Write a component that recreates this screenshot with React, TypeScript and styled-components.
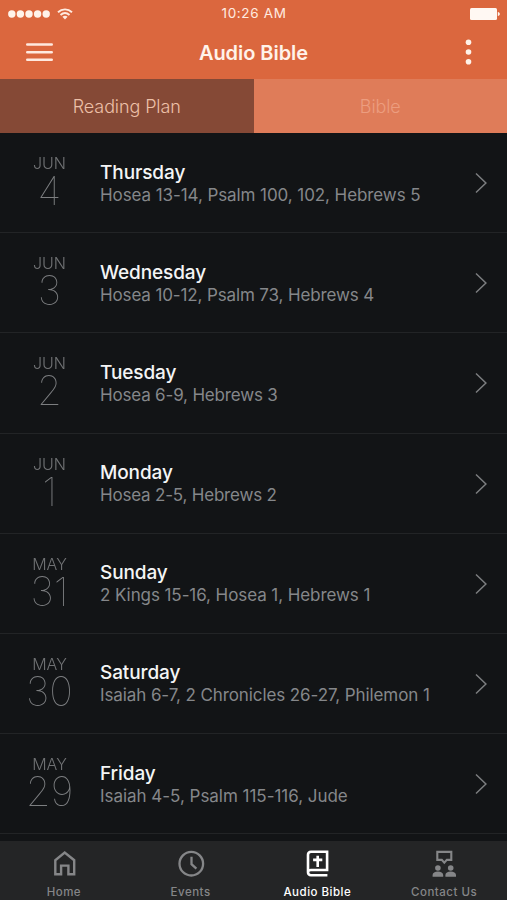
import React from "react";
import styled, { createGlobalStyle } from "styled-components";

const GlobalStyle = createGlobalStyle`
  * { box-sizing: border-box; }
  body { margin: 0; background: #121416; }
`;

const Screen = styled.div`
  width: 507px;
  height: 900px;
  overflow: hidden;
  display: flex;
  flex-direction: column;
  background: #121416;
  color: #fff;
  font-family: Inter, "Liberation Sans", sans-serif;
`;

const Header = styled.header`
  flex: none;
  height: 79px;
  background: #db673e;
`;

const StatusBar = styled.div`
  height: 27px;
  display: grid;
  grid-template-columns: 1fr auto 1fr;
  align-items: center;
  padding: 0 7px 0 8px;
`;

const Signal = styled.div`
  display: flex;
  align-items: center;
  gap: 7px;
`;

const Clock = styled.time`
  font-size: 13.5px;
  letter-spacing: 0.65px;
  line-height: 27px;
  color: #ffebe0;
`;

const BatterySlot = styled.div`
  display: flex;
  justify-content: flex-end;
`;

const NavBar = styled.div`
  height: 52px;
  display: grid;
  grid-template-columns: 1fr auto 1fr;
  align-items: center;
  padding: 0 35px 2px 26px;
`;

const IconButton = styled.button<{ $end?: boolean }>`
  display: flex;
  padding: 0;
  border: 0;
  background: none;
  justify-self: ${(p) => (p.$end ? "end" : "start")};
`;

const Title = styled.h1`
  margin: 1px 0 0 9px;
  font-size: 20px;
  font-weight: 600;
  letter-spacing: -0.05px;
  line-height: 24px;
  color: #fff3ea;
`;

const Tabs = styled.div`
  flex: none;
  height: 54px;
  display: flex;
`;

const Tab = styled.button<{ $active?: boolean }>`
  flex: 1;
  padding: 0;
  border: 0;
  background: ${(p) => (p.$active ? "#854936" : "#df7c59")};
  color: ${(p) => (p.$active ? "#edc0a8" : "#ec9d7f")};
  font-family: inherit;
  font-size: 18px;
  font-weight: 300;
  letter-spacing: -0.1px;
`;

const List = styled.main`
  flex: 1;
  min-height: 0;
  overflow: hidden;
`;

const Row = styled.article`
  height: 100.2px;
  display: grid;
  grid-template-columns: 99px 1fr 32px;
  border-bottom: 1px solid #222426;
`;

const DateCell = styled.div`
  display: flex;
  flex-direction: column;
  align-items: center;
  padding-top: 20px;
  color: #707274;
  will-change: transform;
`;

const Month = styled.span`
  font-size: 16px;
  font-weight: 300;
  line-height: 20px;
`;

const Day = styled.span`
  margin-top: 1px;
  font-size: 40px;
  font-weight: 100;
  line-height: 34px;
  color: #7c7e80;
`;

const Detail = styled.div`
  padding: 27.5px 0 0 1px;
  white-space: nowrap;
`;

const Weekday = styled.h2`
  margin: 0;
  font-size: 19px;
  font-weight: 500;
  letter-spacing: -0.1px;
  line-height: 23px;
  color: #f4f5f5;
`;

const Passage = styled.p<{ $tracking: number }>`
  margin: 0;
  font-size: 17px;
  letter-spacing: ${(p) => p.$tracking}px;
  line-height: 23px;
  color: #85878a;
`;

const Chevron = styled.svg`
  margin-top: 39px;
`;

const BottomBar = styled.nav`
  flex: none;
  height: 59.5px;
  display: grid;
  grid-template-columns: repeat(4, 1fr);
  padding-top: 7.5px;
  background: #242526;
`;

const BottomItem = styled.a<{ $active?: boolean }>`
  display: flex;
  flex-direction: column;
  align-items: center;
  gap: 6px;
  color: ${(p) => (p.$active ? "#ffffff" : "#858688")};
  font-size: 11.5px;
  font-weight: 500;
  letter-spacing: 0.5px;
  line-height: 16px;
  padding-left: 1px;
`;

const plan = [
  { month: "JUN", day: 4, name: "Thursday", text: "Hosea 13-14, Psalm 100, 102, Hebrews 5", tracking: -0.08 },
  { month: "JUN", day: 3, name: "Wednesday", text: "Hosea 10-12, Psalm 73, Hebrews 4", tracking: -0.13 },
  { month: "JUN", day: 2, name: "Tuesday", text: "Hosea 6-9, Hebrews 3", tracking: -0.18 },
  { month: "JUN", day: 1, name: "Monday", text: "Hosea 2-5, Hebrews 2", tracking: -0.2 },
  { month: "MAY", day: 31, name: "Sunday", text: "2 Kings 15-16, Hosea 1, Hebrews 1", tracking: -0.08 },
  { month: "MAY", day: 30, name: "Saturday", text: "Isaiah 6-7, 2 Chronicles 26-27, Philemon 1", tracking: -0.1 },
  { month: "MAY", day: 29, name: "Friday", text: "Isaiah 4-5, Psalm 115-116, Jude", tracking: -0.03 },
];

const HomeIcon = () => (
  <svg width="28" height="30" viewBox="0 0 28 30" fill="none" stroke="currentColor" strokeWidth="2.4">
    <path d="M5.300 12.200 14.700 4.600l9.500 7.600v14h-5.800v-8.600h-7.300v8.600H5.300z" />
  </svg>
);

const ClockIcon = () => (
  <svg width="28" height="30" viewBox="0 0 28 30" fill="none" stroke="currentColor" strokeWidth="2.3">
    <circle cx="14.300" cy="15.700" r="11.800" />
    <path d="M14.500 8.800v7.400l4.900 4.500" />
  </svg>
);

const BibleIcon = () => (
  <svg width="28" height="30" viewBox="0 0 28 30" fill="none" stroke="currentColor" strokeWidth="2.600">
    <path d="M24.400 27.200H8c-2 0-3-1.100-3-3V6.800c0-2 1-3 3-3h16.100v18.200H8c-2 0-3 .8-3 2.200" />
    <path d="M14.700 7.700v11.300M10.100 11.900h9.200" />
  </svg>
);

const ContactIcon = () => (
  <svg width="28" height="30" viewBox="0 0 28 30" fill="none">
    <path d="M7.300 3.900h14v8h-4.500L14.300 14.600l-2.500-2.700H7.300z" stroke="currentColor" strokeWidth="2.100" />
    <g fill="currentColor">
      <circle cx="7.900" cy="20" r="2.800" />
      <circle cx="20.700" cy="20" r="2.800" />
      <path d="M2.600 28.700V27c0-2.200 2.400-3.400 5.300-3.400s5.300 1.200 5.300 3.400v1.700zM15.400 28.700V27c0-2.200 2.400-3.400 5.300-3.400s5.300 1.200 5.300 3.400v1.700z" />
    </g>
  </svg>
);

const destinations = [
  { label: "Home", Icon: HomeIcon },
  { label: "Events", Icon: ClockIcon },
  { label: "Audio Bible", Icon: BibleIcon, active: true },
  { label: "Contact Us", Icon: ContactIcon },
];

export default function App() {
  return (
    <Screen>
      <GlobalStyle />
      <Header>
        <StatusBar>
          <Signal>
            <svg width="42" height="8" viewBox="0 0 42 8" fill="#fff3ea">
              {[3.8, 12.4, 21, 29.6, 38.2].map((cx) => (
                <circle key={cx} cx={cx} cy="4" r="3.700" />
              ))}
            </svg>
            <svg width="16" height="12" viewBox="0 0 16 12" fill="none" stroke="#ffebe0" strokeWidth="1.900">
              <path d="M1 4.200C5 .4 11 .4 15 4.200M3.500 7c2.700-2.400 6.300-2.400 9 0" />
              <path d="M5.400 8.700c1.700-1.200 3.500-1.200 5.200 0L8 11.500z" fill="#ffebe0" stroke="none" />
            </svg>
          </Signal>
          <Clock>10:26 AM</Clock>
          <BatterySlot>
            <svg width="30" height="12" viewBox="0 0 30 12" fill="#fff8f3">
              <rect width="27" height="12" rx="1.500" />
              <path d="M27.800 4c1.300.4 2 1.100 2 2s-.7 1.600-2 2z" />
            </svg>
          </BatterySlot>
        </StatusBar>
        <NavBar>
          <IconButton aria-label="Menu">
            <svg width="27" height="20" viewBox="0 0 27 20" stroke="#ffe9df" strokeWidth="2.600" strokeLinecap="round">
              <path d="M1.300 2.500h24.400M1.300 10.200h24.400M1.300 17.700h24.400" />
            </svg>
          </IconButton>
          <Title>Audio Bible</Title>
          <IconButton $end aria-label="More">
            <svg width="7" height="26" viewBox="0 0 7 26" fill="#fff3ea">
              <circle cx="3.500" cy="3.300" r="2.800" />
              <circle cx="3.500" cy="13" r="2.800" />
              <circle cx="3.500" cy="22.700" r="2.800" />
            </svg>
          </IconButton>
        </NavBar>
      </Header>
      <Tabs>
        <Tab $active>Reading Plan</Tab>
        <Tab>Bible</Tab>
      </Tabs>
      <List>
        {plan.map((r) => (
          <Row key={r.name}>
            <DateCell>
              <Month>{r.month}</Month>
              <Day>{r.day}</Day>
            </DateCell>
            <Detail>
              <Weekday>{r.name}</Weekday>
              <Passage $tracking={r.tracking}>{r.text}</Passage>
            </Detail>
            <Chevron width="14" height="22" viewBox="0 0 14 22" fill="none" stroke="#7b7d7f" strokeWidth="1.500">
              <path d="M1 1.500 10.900 11 1 20.500" />
            </Chevron>
          </Row>
        ))}
      </List>
      <BottomBar>
        {destinations.map(({ label, Icon, active }) => (
          <BottomItem key={label} $active={active}>
            <Icon />
            {label}
          </BottomItem>
        ))}
      </BottomBar>
    </Screen>
  );
}
